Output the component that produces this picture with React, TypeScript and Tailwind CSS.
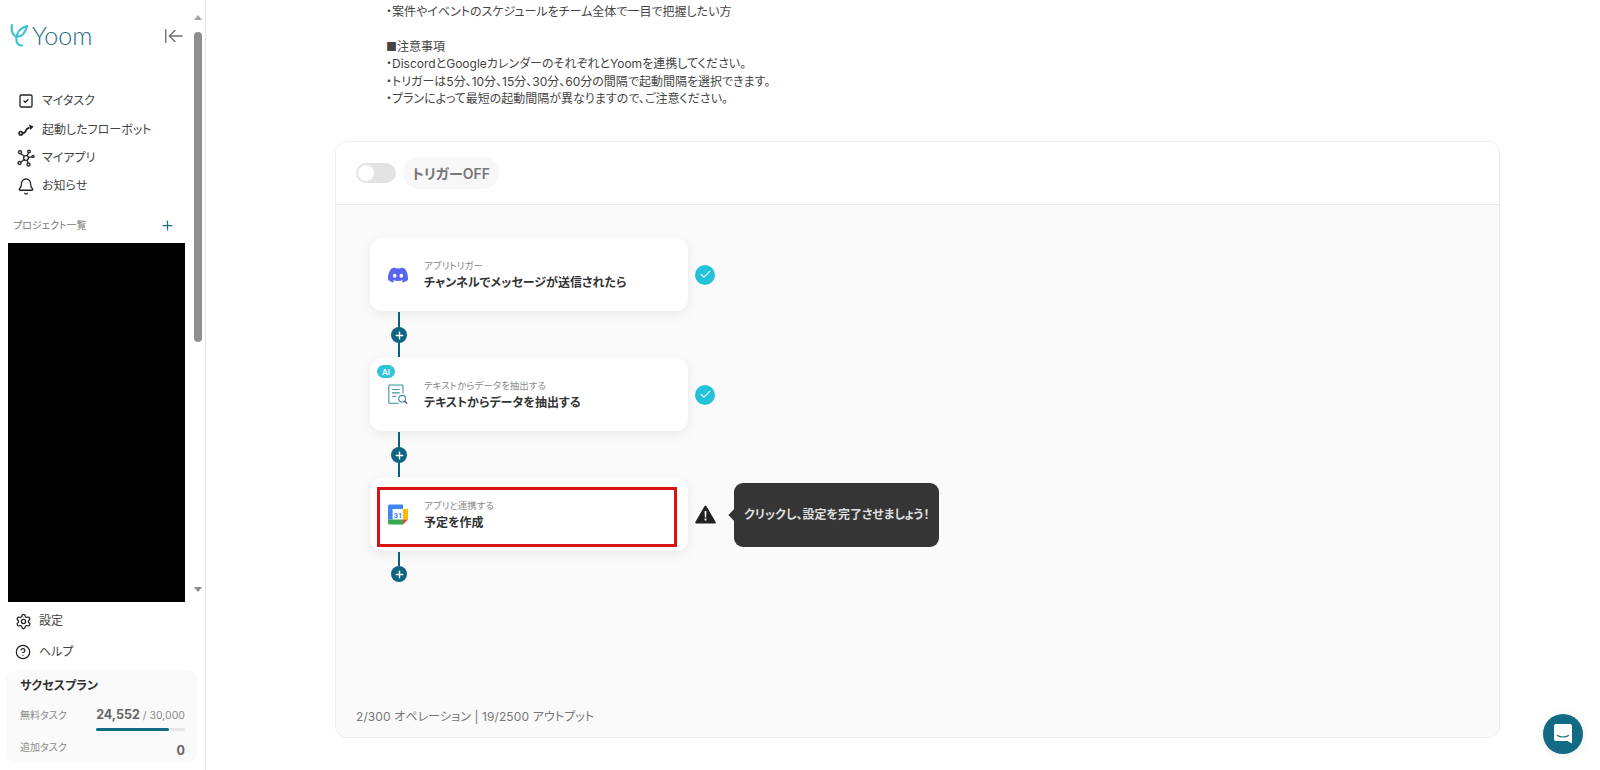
import React from "react";
import { ArrowLeftToLine, Check, CircleHelp, Plus, Settings, Bell, SquareCheck } from "lucide-react";

const jp = { fontFamily: 'Inter, "Noto Sans CJK JP", sans-serif', fontFeatureSettings: '"palt"' };

const NavItem = ({ icon, label }: { icon: React.ReactNode; label: string }) => (
	<div className="flex h-[28.4px] items-center pl-[17px]">
		<div className="flex w-[18px] justify-center">{icon}</div>
		<span className="ml-[7px] text-[12px] text-[#444]">{label}</span>
	</div>
);

const FlowIcon = () => (
	<svg width="17" height="12" viewBox="0 0 17 12" fill="none" stroke="#222" strokeWidth="1.7">
		<circle cx="2.8" cy="9.2" r="1.7" />
		<path d="M4.6 9.2c2.2 0 2.8 -1 3.2 -2.4s1 -2.6 3.6 -3.2" />
		<path d="M11 .4l4.6 2-3.2 3.6z" fill="#222" stroke="none" />
	</svg>
);

const AppsIcon = () => (
	<svg width="18" height="18" viewBox="0 0 18 18" fill="none" stroke="#333" strokeWidth="1.4">
		<circle cx="9" cy="9" r="2.4" />
		<circle cx="3" cy="3.2" r="1.5" />
		<circle cx="12" cy="2.5" r="1.3" />
		<circle cx="16" cy="7.5" r="1.1" />
		<circle cx="2.5" cy="14" r="1.5" />
		<circle cx="11.5" cy="15.5" r="1.5" />
		<path d="M4 4.4l3.4 3M11.5 3.8l-1.5 3.2M15 7.9l-3.9.6M3.8 13.2l3.5-2.8M10 11l1 3" />
	</svg>
);

const LogoMark = () => (
	<svg width="18" height="25" viewBox="0 0 18 25" fill="none" stroke="#3cc4d4" strokeWidth="2.2" strokeLinecap="round">
		<path d="M2 2c-1 6 .5 11 5.5 11.5 4 .3 7.5-3.5 9.5-10" />
		<path d="M17 3c-5 1.5-9.5 5-10.5 10.5-.7 4.5.5 9 5.5 9" />
	</svg>
);

const DiscordIcon = () => (
	<svg width="21" height="16" viewBox="0 0 127.14 96.36">
		<path
			fill="#5865f2"
			d="M107.7 8.07A105.15 105.15 0 0 0 81.47 0a72.06 72.06 0 0 0-3.36 6.83 97.68 97.68 0 0 0-29.11 0A72.37 72.37 0 0 0 45.64 0a105.89 105.89 0 0 0-26.25 8.09C2.79 32.65-1.71 56.6.54 80.21a105.73 105.73 0 0 0 32.17 16.15 77.7 77.7 0 0 0 6.89-11.11 68.42 68.42 0 0 1-10.85-5.18c.91-.66 1.8-1.34 2.66-2a75.57 75.57 0 0 0 64.32 0c.87.71 1.76 1.39 2.66 2a68.68 68.68 0 0 1-10.87 5.19 77 77 0 0 0 6.89 11.1 105.25 105.25 0 0 0 32.19-16.14c2.64-27.38-4.51-51.11-18.9-72.15ZM42.45 65.69C36.18 65.69 31 60 31 53s5-12.74 11.43-12.74S54 46 53.89 53s-5.05 12.69-11.44 12.69Zm42.24 0C78.41 65.69 73.25 60 73.25 53s5-12.74 11.44-12.74S96.23 46 96.12 53s-5.04 12.69-11.43 12.69Z"
		/>
	</svg>
);

const ExtractIcon = () => (
	<svg width="24" height="25" viewBox="0 0 24 25" fill="none" stroke="#3f8ea3" strokeWidth="1.3">
		<path d="M18 11V2a1 1 0 0 0 -1 -1H2a1 1 0 0 0 -1 1v20a1 1 0 0 0 1 1h11" />
		<path d="M5 6.5h9M5 10.5h9M5 14.5h5" />
		<circle cx="17" cy="17.5" r="4" />
		<path d="M20 20.5l3 3" stroke="#333" />
	</svg>
);

const GoogleCalendarIcon = () => (
	<svg width="20" height="21" viewBox="0 0 20 20">
		<path fill="#fff" d="M4.5 4.5h11v11h-11z" />
		<path fill="#4285f4" d="M1.5 0H15v4.6H4.6V15H0V1.5A1.5 1.5 0 0 1 1.5 0z" />
		<path fill="#fbbc04" d="M15 4.6h5V15h-5z" />
		<path fill="#34a853" d="M4.6 15H15v5H1.5A1.5 1.5 0 0 1 0 18.5V15z" />
		<path fill="#ea4335" d="M15 15h5l-5 5z" />
		<text x="10" y="13" textAnchor="middle" fontSize="7.5" fontWeight="700" fill="#4285f4" fontFamily="Roboto, sans-serif">31</text>
	</svg>
);

const StepCard = ({ icon, small, title, badge, framed }: { icon: React.ReactNode; small: string; title: string; badge?: boolean; framed?: boolean }) => (
	<div className="relative flex h-[73px] w-[318px] items-center rounded-[12px] bg-white pl-[18px] shadow-[0_3px_12px_rgba(0,0,0,0.07)]">
		{badge && (
			<div className="absolute left-[7px] top-[7px] flex h-[13px] w-[18px] items-center justify-center rounded-full bg-[#2ec5d8] text-[8px] font-semibold leading-none text-white">
				AI
			</div>
		)}
		{framed && <div className="absolute bottom-[4px] left-[7px] right-[11px] top-[9px] border-[3px] border-[#d81313]" />}
		<div className="flex w-[20px] justify-center">{icon}</div>
		<div className="ml-[16px] mt-[1px]">
			<div className="text-[9.5px] leading-[14px] text-[#8a8a8a]">{small}</div>
			<div className="mt-[1px] text-[12px] font-bold leading-[18px] text-[#333]">{title}</div>
		</div>
	</div>
);

const DoneBadge = () => (
	<div className="flex h-[20px] w-[20px] items-center justify-center rounded-full bg-[#22c3d8]">
		<Check size={13} color="#fff" strokeWidth={2} />
	</div>
);

const WarningIcon = () => (
	<svg width="21" height="19" viewBox="0 0 21 19">
		<path fill="#222" stroke="#222" strokeWidth="2" strokeLinejoin="round" d="M10.5 1.5 1.2 17.5h18.6z" />
		<path fill="#fff" d="M9.6 6h1.8l-.3 6.4h-1.2zM9.6 13.6h1.8v1.8H9.6z" />
	</svg>
);

const Connector = ({ height, last }: { height: number; last?: boolean }) => (
	<div className="relative ml-[28px] flex w-[2px] flex-col items-center py-[1px]" style={{ height }}>
		<div className={last ? "h-[14px] w-[2px] bg-[#0f5f78]" : "w-[2px] flex-1 bg-[#0f5f78]"} />
		<div className={`absolute flex h-[16px] w-[16px] items-center justify-center rounded-full bg-[#0f6580] ${last ? "top-[15px]" : "top-[16px]"}`}>
			<Plus size={11} color="#fff" strokeWidth={3} />
		</div>
	</div>
);

const App = () => {
	return (
		<div className="flex h-[770px] w-[1600px] overflow-hidden bg-white" style={jp}>
			<aside className="flex h-full w-[206px] shrink-0 flex-col border-r border-[#e6e6e6]">
				<div className="flex h-[605px] shrink-0">
					<div className="w-[193px] shrink-0">
						<div className="flex h-[71px] items-center pl-[10px] pr-[8px]">
							<LogoMark />
							<span className="ml-[4px] text-[25px] font-light leading-none text-[#256f85]" style={{ fontFamily: "Lato, sans-serif" }}>
								Yoom
							</span>
							<ArrowLeftToLine className="ml-auto" size={22} color="#707070" strokeWidth={1.5} />
						</div>
						<div className="mt-[16px]">
							<NavItem icon={<SquareCheck size={16} color="#222" strokeWidth={2} />} label="マイタスク" />
							<NavItem icon={<FlowIcon />} label="起動したフローボット" />
							<NavItem icon={<AppsIcon />} label="マイアプリ" />
							<NavItem icon={<Bell size={19} color="#222" strokeWidth={1.7} />} label="お知らせ" />
						</div>
						<div className="mt-[15px] flex h-[20px] items-center justify-between pl-[13px] pr-[18px]">
							<span className="text-[10px] text-[#777]">プロジェクト一覧</span>
							<Plus size={15} color="#1b6f88" strokeWidth={2} />
						</div>
						<div className="ml-[8px] mt-[7px] h-[359px] w-[177px] bg-black" />
					</div>
					<div className="mt-[15px] flex h-[577px] w-[10px] flex-col items-center">
						<div className="h-0 w-0 border-x-[4px] border-b-[5px] border-x-transparent border-b-[#a3a3a3]" />
						<div className="mt-[12px] h-[310px] w-[8px] rounded-full bg-[#8f8f8f]" />
						<div className="mt-auto h-0 w-0 border-x-[4px] border-t-[5px] border-x-transparent border-t-[#8a8a8a]" />
					</div>
				</div>
				<div className="mt-[1px] flex h-[30.5px] items-center pl-[15px]">
					<Settings size={17} color="#222" strokeWidth={1.8} />
					<span className="ml-[7px] text-[12px] text-[#444]">設定</span>
				</div>
				<div className="flex h-[30.5px] items-center pl-[15px]">
					<CircleHelp size={16} color="#222" strokeWidth={1.8} />
					<span className="ml-[8px] text-[12px] text-[#444]">ヘルプ</span>
				</div>
				<div className="ml-[6px] mr-[8px] mt-[4px] h-[91px] rounded-[8px] bg-[#fafafa] pl-[14px] pr-[12px] pt-[6px]">
					<div className="text-[12px] font-bold leading-[18px] text-[#333]">サクセスプラン</div>
					<div className="mt-[11px] flex items-center justify-between">
						<span className="text-[10px] text-[#8a8a8a]">無料タスク</span>
						<span className="text-[10.5px] text-[#8a8a8a]">
							<span className="text-[12.5px] font-bold text-[#666]">24,552</span> / 30,000
						</span>
					</div>
					<div className="ml-[76px] mt-[3px] h-[3px] rounded-full bg-[#e8e8e8]">
						<div className="h-full w-[82%] rounded-full bg-[#136a84]" />
					</div>
					<div className="mt-[9px] flex items-start justify-between">
						<span className="text-[10px] text-[#8a8a8a]">追加タスク</span>
						<span className="mt-[2px] text-[12.5px] font-bold text-[#666]">0</span>
					</div>
				</div>
			</aside>

			<main className="relative min-w-0 flex-1 pl-[129px] pr-[100px]">
				<div className="h-[141px] pl-[51px] pt-[2.5px] text-[12px] leading-[17.6px] text-[#444]">
					<div>・案件やイベントのスケジュールをチーム全体で一目で把握したい方</div>
					<div className="h-[17.6px]" />
					<div>■注意事項</div>
					<div>・DiscordとGoogleカレンダーのそれぞれとYoomを連携してください。</div>
					<div>・トリガーは5分、10分、15分、30分、60分の間隔で起動間隔を選択できます。</div>
					<div>・プランによって最短の起動間隔が異なりますので、ご注意ください。</div>
				</div>
				<div className="flex h-[597px] flex-col overflow-hidden rounded-[12px] border border-[#ececec]">
					<div className="flex h-[63px] shrink-0 items-center border-b border-[#e9e9e9] bg-white pl-[20px]">
						<div className="flex h-[20px] w-[40px] items-center rounded-full bg-[#e3e3e3] pl-[2px]">
							<div className="h-[16px] w-[16px] rounded-full bg-white" />
						</div>
						<div className="ml-[7px] flex h-[32px] w-[96px] items-center justify-center rounded-full bg-[#f8f8f8] text-[14px] font-semibold text-[#777]">
							トリガーOFF
						</div>
					</div>
					<div className="flex flex-1 flex-col bg-[#fafafa] pl-[34px] pt-[33px]">
						<div className="flex items-center gap-[7px]">
							<StepCard icon={<DiscordIcon />} small="アプリトリガー" title="チャンネルでメッセージが送信されたら" />
							<DoneBadge />
						</div>
						<Connector height={47} />
						<div className="flex items-center gap-[7px]">
							<StepCard icon={<ExtractIcon />} small="テキストからデータを抽出する" title="テキストからデータを抽出する" badge />
							<DoneBadge />
						</div>
						<Connector height={47} />
						<div className="flex items-center">
							<StepCard icon={<GoogleCalendarIcon />} small="アプリと連携する" title="予定を作成" framed />
							<div className="ml-[7px]">
								<WarningIcon />
							</div>
							<div className="relative ml-[18px] flex h-[64px] w-[205px] items-center rounded-[9px] bg-[#353535] pl-[10px] text-[12px] font-bold text-[#dedede]">
								<div className="absolute -left-[4px] top-[28px] h-[8px] w-[8px] rotate-45 bg-[#353535]" />
								クリックし、設定を完了させましょう！
							</div>
						</div>
						<Connector height={30} last />
						<div className="mb-[11px] mt-auto text-[12px] tracking-[0.1px] text-[#777]">
							<span className="-ml-[14px]">2/300 オペレーション | 19/2500 アウトプット</span>
						</div>
					</div>
				</div>
				<div className="absolute bottom-[16px] right-[17px] flex h-[40px] w-[40px] items-center justify-center rounded-full bg-[#136a84] shadow-[0_1px_10px_rgba(0,0,0,0.08)]">
					<svg width="20" height="22" viewBox="0 0 20 22">
						<path fill="#fff" d="M3 1h14a2 2 0 0 1 2 2v17.5l-4.5-2.5H3a2 2 0 0 1-2-2V3a2 2 0 0 1 2-2z" />
						<path fill="none" stroke="#136a84" strokeWidth="1.2" strokeLinecap="round" d="M4.5 12.5c3 2 8 2 11 0" />
					</svg>
				</div>
			</main>
		</div>
	);
};

export default App;
